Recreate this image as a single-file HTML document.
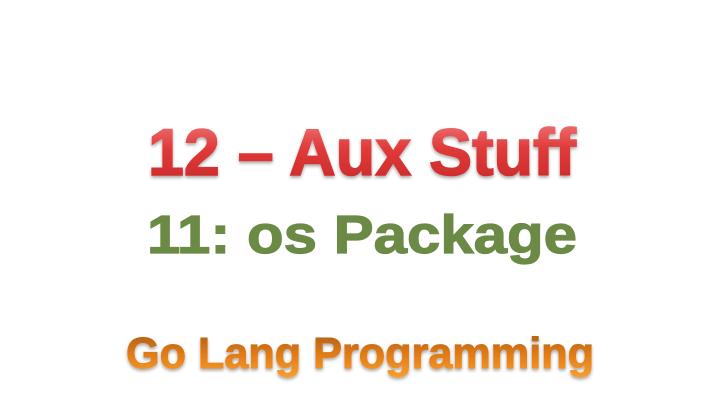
<!DOCTYPE html>
<html><head><meta charset="utf-8"><style>
html,body{margin:0;padding:0;background:#fff;width:720px;height:405px;overflow:hidden}
</style></head><body>
<svg width="720" height="405" xmlns="http://www.w3.org/2000/svg">
<defs>
<linearGradient id="r" x1="0" y1="0" x2="0" y2="1">
<stop offset="0" stop-color="#f08080"/><stop offset="0.45" stop-color="#e03a3a"/><stop offset="1" stop-color="#c82828"/>
</linearGradient>
<linearGradient id="o" x1="0" y1="0" x2="0" y2="1">
<stop offset="0" stop-color="#a85a10"/><stop offset="0.5" stop-color="#e07a15"/><stop offset="1" stop-color="#f8a030"/>
</linearGradient>
<filter id="s" x="-5%" y="-20%" width="110%" height="150%"><feDropShadow dx="0" dy="2" stdDeviation="1.5" flood-color="#000" flood-opacity="0.35"/></filter>
</defs>
<g font-family="Liberation Sans, sans-serif" font-weight="bold">
<text x="148" y="175" font-size="66" fill="url(#r)" stroke="url(#r)" stroke-width="1.5" filter="url(#s)" textLength="428" lengthAdjust="spacingAndGlyphs">12 – Aux Stuff</text>
<text x="147" y="253" font-size="54" fill="#6b8a45" stroke="#6b8a45" stroke-width="1.2" textLength="430" lengthAdjust="spacingAndGlyphs">11: os Package</text>
<text x="126" y="368" font-size="44" fill="url(#o)" stroke="url(#o)" stroke-width="1" filter="url(#s)" textLength="468" lengthAdjust="spacingAndGlyphs">Go Lang Programming</text>
</g>
</svg>
</body></html>
